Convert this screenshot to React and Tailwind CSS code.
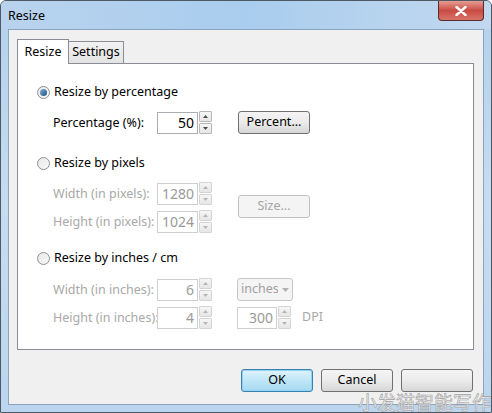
import React from 'react'

const font = { fontFamily: '"Segoe UI", "Noto Sans", "Liberation Sans", sans-serif' }

function Spinner({ disabled }) {
  const arrow = disabled ? '#b5b5b5' : '#4d4d4d'
  const border = disabled ? 'border-[#d5d5d5]' : 'border-[#b7b7b7]'
  return (
    <div className="flex flex-col gap-[1px] ml-[1px]">
      {[0, 1].map(i => (
        <div key={i} className={`w-[13px] h-[11px] border ${border} bg-gradient-to-b from-[#f6f6f6] to-[#e6e6e6] flex items-center justify-center rounded-[1px]`}>
          <svg width="5" height="3" viewBox="0 0 5 3">
            {i === 0 ? <path d="M0 3 L2.5 0 L5 3 Z" fill={arrow} /> : <path d="M0 0 L2.5 3 L5 0 Z" fill={arrow} />}
          </svg>
        </div>
      ))}
    </div>
  )
}

function NumField({ value, disabled, width = 'w-[41px]' }) {
  return (
    <div className="flex items-center">
      <div className={`${width} h-[22px] border ${disabled ? 'border-[#cfcfcf] text-[#9a9a9a]' : 'border-[#abadb3] text-black'} bg-white flex items-center justify-end pr-[3px] text-[14px] leading-none`}>
        {value}
      </div>
      <Spinner disabled={disabled} />
    </div>
  )
}

function Radio({ checked, label }) {
  return (
    <div className="flex items-center h-[16px]">
      <div className="w-[13px] h-[13px] rounded-full border border-[#8e8f8f] bg-gradient-to-br from-[#e8e8e8] to-[#f8f8f8] flex items-center justify-center">
        {checked && <div className="w-[7px] h-[7px] rounded-full bg-gradient-to-br from-[#7fb4dc] to-[#1c4f80]" />}
      </div>
      <span className="ml-[4px] text-[12.5px] text-black whitespace-nowrap">{label}</span>
    </div>
  )
}

function Label({ children, disabled }) {
  return (
    <span className={`w-[104px] shrink-0 text-[12.5px] leading-[16px] whitespace-nowrap ${disabled ? 'text-[#a8a8a8]' : 'text-black'}`}>{children}</span>
  )
}

function Btn({ children, disabled, primary }) {
  let cls = 'border-[#707070] bg-gradient-to-b from-[#f4f4f4] via-[#ebebeb] to-[#d6d6d6] text-black'
  if (disabled) cls = 'border-[#c0c3c5] bg-[#f4f4f4] text-[#a5a5a5]'
  if (primary) cls = 'border-[#3c7fb1] bg-gradient-to-b from-[#e0f3fc] via-[#bfe6f7] to-[#a7d9f1] text-black shadow-[inset_0_0_0_1px_#8ed3f0]'
  return (
    <div className={`w-[72px] h-[23px] rounded-[3px] border ${cls} flex items-center justify-center text-[12.5px] whitespace-nowrap`}>
      {children}
    </div>
  )
}

export default function App() {
  return (
    <div style={font} className="w-[492px] h-[413px] bg-gradient-to-b from-[#b4d0ec] via-[#c6dcf1] to-[#bcd5ee] border border-[#4d5a66] rounded-t-[6px] overflow-hidden flex flex-col">
      <div className="h-[28px] flex items-start justify-between pl-[7px] pr-[7px] bg-gradient-to-r from-[#b9d3ee] via-[#a9cdee] to-[#c2d8ef]">
        <span className="text-[12.5px] text-black mt-[6px]">Resize</span>
        <div className="w-[46px] h-[20px] rounded-b-[4px] border border-t-0 border-[#5a2b2b] bg-gradient-to-b from-[#e69c94] via-[#c94b43] to-[#d8736a] flex items-center justify-center">
          <svg width="12" height="10" viewBox="0 0 12 10">
            <path d="M1.5 1 L10.5 9 M10.5 1 L1.5 9" stroke="#ffffff" strokeWidth="2.4" strokeLinecap="round" />
          </svg>
        </div>
      </div>
      <div className="mx-[7px] h-[376px] bg-[#f0f0f0] border border-[#8ba3bd] pl-[8px] pt-[8px] relative">
        <div className="flex items-end h-[25px]">
          <div className="w-[52px] h-[25px] bg-white border border-b-0 border-[#898c95] flex items-center justify-center text-[12.5px] text-black relative top-[1px] z-10">Resize</div>
          <div className="w-[55px] h-[22px] bg-gradient-to-b from-[#f2f2f2] to-[#e3e3e3] border border-l-0 border-b-0 border-[#898c95] flex items-center justify-center text-[12.5px] text-black">Settings</div>
        </div>
        <div className="w-[457px] h-[287px] bg-white border border-[#898c95] pl-[19px] pt-[20px]">
          <Radio checked label="Resize by percentage" />
          <div className="flex items-center mt-[11px] ml-[16px]">
            <Label>Percentage (%):</Label>
            <NumField value="50" />
            <div className="ml-[26px]"><Btn>Percent...</Btn></div>
          </div>

          <div className="mt-[21px]"><Radio label="Resize by pixels" /></div>
          <div className="flex items-center mt-[11px] ml-[16px]">
            <div className="flex flex-col gap-[5px]">
              <div className="flex items-center">
                <Label disabled>Width (in pixels):</Label>
                <NumField value="1280" disabled />
              </div>
              <div className="flex items-center">
                <Label disabled>Height (in pixels):</Label>
                <NumField value="1024" disabled />
              </div>
            </div>
            <div className="ml-[26px] -mt-[3px]"><Btn disabled>Size...</Btn></div>
          </div>

          <div className="mt-[17px]"><Radio label="Resize by inches / cm" /></div>
          <div className="flex flex-col gap-[5px] mt-[12px] ml-[16px]">
            <div className="flex items-center">
              <Label disabled>Width (in inches):</Label>
              <NumField value="6" disabled />
              <div className="ml-[25px] w-[56px] h-[23px] rounded-[3px] border border-[#c6c6c6] bg-[#f4f4f4] flex items-center pl-[3px] text-[12.5px] text-[#a0a0a0] overflow-hidden">
                <span className="w-[37px] overflow-hidden whitespace-nowrap">inches</span>
                <svg width="7" height="4" viewBox="0 0 7 4" className="ml-[4px]">
                  <path d="M0 0 L3.5 4 L7 0 Z" fill="#b0b0b0" />
                </svg>
              </div>
            </div>
            <div className="flex items-center">
              <Label disabled>Height (in inches):</Label>
              <NumField value="4" disabled />
              <div className="ml-[25px]"><NumField value="300" disabled width="w-[40px]" /></div>
              <span className="ml-[11px] text-[12.5px] text-[#a8a8a8]">DPI</span>
            </div>
          </div>
        </div>
        <div className="flex justify-end gap-[8px] pr-[10px] mt-[19px]">
          <Btn primary>OK</Btn>
          <Btn>Cancel</Btn>
          <Btn />
        </div>
        <div className="absolute right-[-8px] bottom-[-10px] text-[19px] leading-[24px] text-[#f2f2f2] pointer-events-none whitespace-nowrap" style={{ fontFamily: '"Noto Sans CJK SC", sans-serif', WebkitTextStroke: '0.6px #a0a0a0' }}>
          小发猫智能写作
        </div>
      </div>
    </div>
  )
}
